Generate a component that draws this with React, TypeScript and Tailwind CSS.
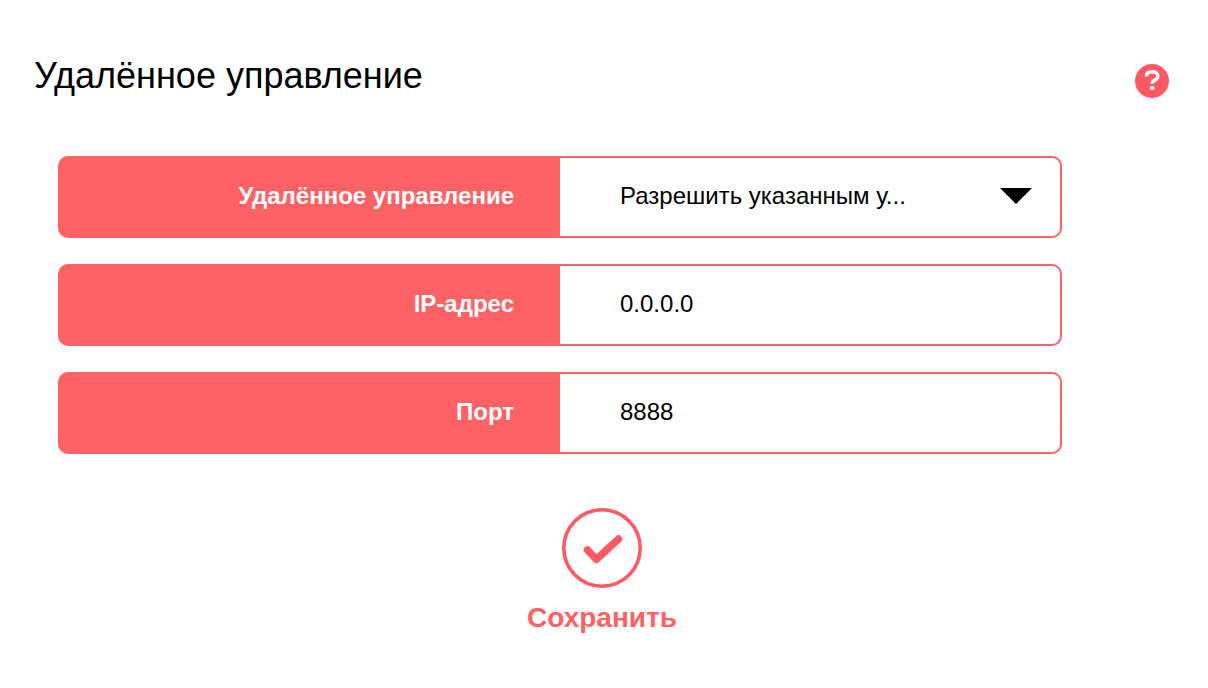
import type { ReactNode } from 'react';

type FieldProps = { id: string; label: string; children: ReactNode };

function Field({ id, label, children }: FieldProps) {
  return (
    <div className="grid grid-cols-2 overflow-hidden rounded-[10px] bg-[#fe6264]">
      <label
        htmlFor={id}
        className="flex h-[82px] items-center justify-end pr-[46px] pb-0.5 text-2xl font-bold text-white"
      >
        {label}
      </label>
      <div className="relative my-0.5 mr-0.5 rounded-r-lg bg-white">{children}</div>
    </div>
  );
}

const control = 'block h-full w-full appearance-none rounded-r-lg bg-transparent pb-0.5 pl-[60px] text-2xl text-black outline-none';

function HelpIcon() {
  return (
    <svg viewBox="0 0 34 34" className="size-[34px]" fill="none" aria-hidden="true">
      <circle cx="17" cy="17" r="17" fill="#ff5a64" />
      <path
        d="M11.500 12.200C11.500 9.300 13.800 7.800 17 7.800s5.800 1.500 5.800 4.400c0 2.200-1.400 3.100-3.100 4-1.700.8-2.500 1.500-2.500 3.600"
        stroke="#fff"
        strokeWidth="3.500"
      />
      <ellipse cx="17.200" cy="24" rx="2.500" ry="2" fill="#fff" />
    </svg>
  );
}

function SaveIcon() {
  return (
    <svg viewBox="0 0 80 80" className="size-20" fill="none" stroke="#ff5a64" aria-hidden="true">
      <circle cx="40" cy="40" r="38.200" strokeWidth="3.600" />
      <path d="M25.500 42L34.500 51.300L56.500 31" strokeWidth="7.500" strokeLinecap="round" strokeLinejoin="round" />
    </svg>
  );
}

export default function App() {
  return (
    <main className="min-h-screen bg-white pt-[54px] pr-[38px] pb-12 pl-[34px] font-['Liberation_Sans',Arial,sans-serif] text-black">
      <header className="flex h-[54px] items-center justify-between pr-px">
        <h1 className="pb-2.5 text-4xl">Удалённое управление</h1>
        <button type="button" aria-label="Справка">
          <HelpIcon />
        </button>
      </header>

      <form className="mt-12" onSubmit={(event) => event.preventDefault()}>
        <div className="flex flex-col gap-[26px] pr-[108px] pl-6">
          <Field id="remote" label="Удалённое управление">
            <select id="remote" className={control}>
              <option>Разрешить указанным у...</option>
            </select>
            <svg
              viewBox="0 0 32 16"
              className="pointer-events-none absolute top-[30px] right-7 h-4 w-8"
              aria-hidden="true"
            >
              <path d="M0 0H32L16 16Z" fill="#000" />
            </svg>
          </Field>
          <Field id="ip" label="IP-адрес">
            <input id="ip" type="text" defaultValue="0.0.0.0" className={control} />
          </Field>
          <Field id="port" label="Порт">
            <input id="port" type="text" inputMode="numeric" defaultValue="8888" className={control} />
          </Field>
        </div>

        <button
          type="submit"
          className="mx-auto mt-[54px] flex flex-col items-center gap-3 text-[28px] leading-9 font-bold text-[#fe6264]"
        >
          <SaveIcon />
          Сохранить
        </button>
      </form>
    </main>
  );
}
